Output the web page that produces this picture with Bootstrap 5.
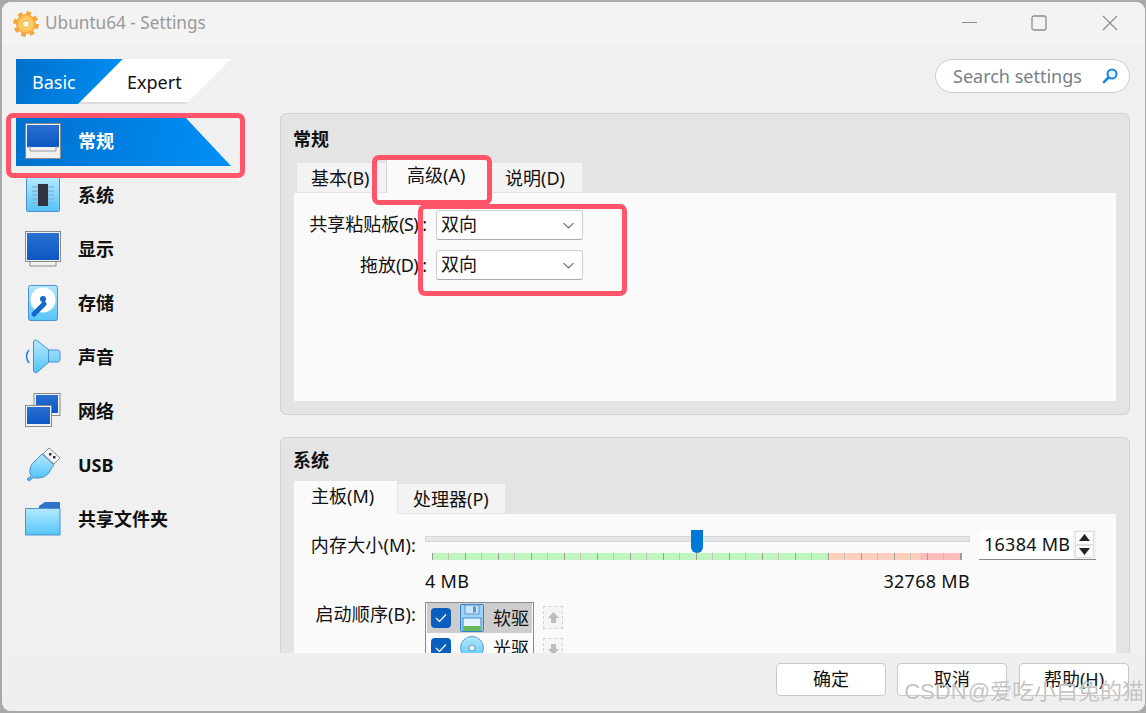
<!DOCTYPE html>
<html lang="zh-CN">
<head>
<meta charset="utf-8">
<title>Ubuntu64 - Settings</title>
<link rel="stylesheet" href="https://cdn.jsdelivr.net/npm/bootstrap@5.3.0/dist/css/bootstrap.min.css">
<style>
html,body{height:713px;overflow:hidden}
body{background:#a9a9a9;padding:2px 1px 0 2px;font-family:"Noto Sans","Noto Sans CJK SC",sans-serif;font-size:18px;color:#111;line-height:1.3}
.dlg{height:709px;background:#f0f0f0;border-radius:9px;overflow:hidden;position:relative}
.tbar{height:43px;background:#f3f3f3;padding-left:11px;color:#999}
.tbar-title{margin-left:6px;font-size:17.2px;padding-bottom:1px}
.winbtns{margin-left:auto;gap:54px;padding:0 27px 2px 0}
.w-min{margin-right:-1px}
.w-max{margin-right:1px}
.body-row{height:608px;overflow:hidden}
.side{width:278px;padding:14px 0 0 14px;flex:none}
.mode{width:215px;height:45px}
.mode-a,.mode-b{height:45px;display:flex;align-items:center;padding-top:2px}
.mode-a{width:107px;padding-left:16px;color:#fff;background:linear-gradient(110deg,#0070cc,#0090f5);clip-path:polygon(0 0,100% 0,63px 100%,0 100%)}
.mode-b{width:153px;margin-left:-45px;padding-left:49px;background:linear-gradient(#fff 43px,#ddd 43px);clip-path:polygon(45px 0,100% 0,108px 100%,0 100%)}
.snav{margin-top:10px;width:215px}
.sitem{height:54px;padding-left:9px;gap:17px;font-weight:700;color:#111;position:relative}
.sitem svg{flex:none;position:relative}
.sitem span{position:relative;padding-top:2px}
.sitem.on{color:#fff}
.sitem.on::before{content:"";position:absolute;inset:3px 0 2px;background:linear-gradient(100deg,#0070cc,#0090f8);clip-path:polygon(0 0,169px 0,100% 100%,0 100%)}
.mainc{flex:1;padding:14px 15px 0 0;min-width:0}
.searchb{width:195px;height:34px;background:#fff;border:1px solid #ccc;border-radius:17px;padding:2px 11px 0 17px;color:#76808a;margin-left:auto;margin-bottom:20px}
.searchb svg{margin-top:-2px}
.gbox{background:#e4e4e4;border:1px solid #d2d2d2;border-radius:6px;padding:0 13px}
.gbox-1{height:302px;margin-bottom:22px}
.gbox-2{height:300px}
.gtitle{font-weight:700;display:flex;align-items:center;margin-left:-1px}
.gbox-1 .gtitle{height:46px;padding-top:6px}
.gbox-2 .gtitle{height:43px;padding-top:2px}
.tabs-x{border:0;flex-wrap:nowrap;align-items:flex-end;gap:0}
.tabs-x .nav-link{height:30px;margin:0;padding:4px 0 0 14px;background:#f3f3f3;color:#111;border:0;border-bottom:1px solid #e4e4e4;border-radius:0;white-space:nowrap}
.tabs-x .nav-link.active{height:33px;padding-top:4px;background:#fafafa;color:#111;border:0;border-radius:0}
.tabs-1{padding-left:3px}
.t-1a{width:89px}.t-1b{width:105px;padding-left:20px!important;border-left:1px solid #d5d5d5!important}.t-1c{width:91px}
.t-2a{width:103px;padding-left:17px!important}.t-2b{width:107px;margin-left:1px!important;padding-left:15px!important}
.tpanel{background:#fafafa}
.tpanel-1{height:208px;padding-top:17px}
.tpanel-2{height:300px;padding-top:16px}
.lbl{width:133px;text-align:right;flex:none}
.lbl-2{width:122px;text-align:right;flex:none;letter-spacing:.15px;padding-top:1px}
.tight{letter-spacing:-.6px}
.colon{margin-left:4px}
.frow{height:30px;gap:9px}
.frow+.frow{margin-top:10px}
.frow+.frow .lbl{padding-top:1px}
.combo{width:147px;height:30px;padding:0 0 2px 4px;font-size:18px;line-height:27px;color:#111;border:1px solid #d0d0d0;border-bottom-color:#aaa;border-radius:3px;background-color:#fff;background-image:url("data:image/svg+xml,%3csvg xmlns='http://www.w3.org/2000/svg' viewBox='0 0 16 16'%3e%3cpath fill='none' stroke='%23666' stroke-width='1.3' d='M2 5l6 6 6-6'/%3e%3c/svg%3e");background-position:right 7px center;background-size:13px 13px;font-family:inherit}
.mem-row{height:30px;gap:9px}
.slid{width:545px;height:30px;position:relative}
.strack{position:absolute;left:0;right:0;top:6px;height:6px;background:#e5e7e8;border:1px solid #d5d7d8}
.sticks{position:absolute;left:7px;width:530px;top:23px;height:7px;background:repeating-linear-gradient(90deg,#a39d92 0 1.5px,transparent 1.5px 16.5px,#c4c0b6 16.5px 17.2px,transparent 17.2px 33px),linear-gradient(90deg,#bff6bf 0 395px,#ffd0bd 395px 488px,#ffbcbc 488px)}
.sthumb{position:absolute;left:266px;top:0;width:12px;height:23px;background:#0078d7;border-radius:0 0 6px 6px}
.spinb{width:117px;height:30px;border-bottom:1px solid #888;background:#f0f0f0}
.spinv{width:94px;height:29px;background:#fff;padding:3px 0 0 5px;white-space:nowrap;letter-spacing:.25px}
.spinbtn{flex:1;padding:1px 2px}
.spinbtn i{flex:1;display:flex;align-items:center;justify-content:center;background:#fbfbfb;border:1px solid #e0e0e0}
.rng{width:545px;margin:9px 0 9px 131px;height:24px;padding-top:1px;letter-spacing:.3px}
.boot-row{gap:9px}
.bootl{width:109px;border:solid #8a8a8a;border-width:1px 1px 0;padding:0 1px;flex:none}
.bootr{height:30px;padding-left:4px;gap:9px}
.bootr>span:last-child{padding-top:1px}
.bootr.sel{background:#cdcdcd}
.chk{width:20px;height:20px;background:#0a5fbe;border-radius:4px;flex:none;display:flex;align-items:center;justify-content:center}
.arrb{width:20px;height:23px;border:1px dashed #d4d4d4;background:#f5f5f5;margin-bottom:9px;display:flex;align-items:center;justify-content:center}
.arrcol{margin:4px 0 0 0}
.footb{height:58px;padding:10px 16px 0 0;gap:11px;background:#efefef}
.fbtn{width:110px;height:33px;padding:0;font-size:18px;line-height:31px;background:#fff;border:1px solid #c9c9c9;border-radius:4px;color:#111}
.fbtn-last{margin-left:1px}
.redb{position:absolute;border:5px solid #ff5469;border-radius:7px}
.red-1{left:4px;top:111px;width:239px;height:65px}
.red-2{left:370px;top:153px;width:120px;height:50px}
.red-3{left:416px;top:202px;width:209px;height:92px}
.wmk{position:absolute;right:1px;top:676px;font-size:22px;word-spacing:-5px;color:rgba(135,135,135,.5);white-space:nowrap;text-shadow:0 0 1px #fff;font-family:"Liberation Sans","Noto Sans CJK SC",sans-serif}
</style>
</head>
<body>
<div class="dlg d-flex flex-column">
  <div class="tbar d-flex align-items-center">
    <svg width="26" height="26" viewBox="0 0 26 26">
      <defs>
        <linearGradient id="gBlue" x1="0" y1="0" x2="0" y2="1"><stop offset="0" stop-color="#2a6fd0"/><stop offset="1" stop-color="#0b57c4"/></linearGradient>
        <linearGradient id="gSky" x1="0" y1="0" x2="0" y2="1"><stop offset="0" stop-color="#b4e9ff"/><stop offset="1" stop-color="#55c4f7"/></linearGradient>
        <radialGradient id="gGear"><stop offset="0" stop-color="#fff0a0"/><stop offset="1" stop-color="#fbb340"/></radialGradient>
      </defs>
      <circle cx="13" cy="13" r="11" fill="none" stroke="#f8a63a" stroke-width="3.6" stroke-dasharray="4.6 4.04"/>
      <circle cx="13" cy="13" r="9.5" fill="url(#gGear)" stroke="#ee9632" stroke-width=".8"/>
      <circle cx="13" cy="13" r="3.6" fill="#fff8d0" stroke="#f2a848"/>
    </svg>
    <span class="tbar-title">Ubuntu64 - Settings</span>
    <div class="winbtns d-flex align-items-center">
      <svg class="w-min" width="16" height="16" viewBox="0 0 16 16"><path d="M0 7.500h15" stroke="#8c8c8c" stroke-width="1.200"/></svg>
      <svg class="w-max" width="16" height="16" viewBox="0 0 16 16"><rect x="1" y="1" width="14" height="14" rx="2" fill="none" stroke="#8c8c8c" stroke-width="1.300"/></svg>
      <svg width="16" height="16" viewBox="0 0 16 16"><path d="M1 1l14 14M15 1L1 15" stroke="#8c8c8c" stroke-width="1.200"/></svg>
    </div>
  </div>

  <div class="body-row d-flex">
    <aside class="side">
      <div class="mode d-flex">
        <div class="mode-a">Basic</div>
        <div class="mode-b">Expert</div>
      </div>
      <div class="snav d-flex flex-column">
        <div class="sitem on d-flex align-items-center">
          <svg width="36" height="36" viewBox="0 0 36 36"><rect x=".5" y=".5" width="35" height="35" fill="#f1f1f1" stroke="#8a8a8a"/><rect x="2" y="2" width="32" height="22" fill="url(#gBlue)"/><path d="M2 24h3v4h26v-4h3" fill="none" stroke="#9a9a9a"/></svg>
          <span>常规</span>
        </div>
        <div class="sitem d-flex align-items-center">
          <svg width="36" height="36" viewBox="0 0 36 36"><rect x="1.500" y=".5" width="33" height="34" rx="1" fill="url(#gSky)" stroke="#4d90d0"/><path d="M7 10h22M7 14h22M7 18h22M7 22h22M7 26h22" stroke="#7fb4dc" stroke-width="1.500"/><rect x="13" y="7" width="10" height="22" fill="#30343e"/></svg>
          <span>系统</span>
        </div>
        <div class="sitem d-flex align-items-center">
          <svg width="36" height="36" viewBox="0 0 36 36"><rect x=".5" y=".5" width="35" height="30" fill="#f1f1f1" stroke="#8a8a8a"/><path d="M5 31v4h26v-4" fill="#f1f1f1" stroke="#8a8a8a"/><rect x="2" y="2" width="32" height="27" fill="url(#gBlue)"/></svg>
          <span>显示</span>
        </div>
        <div class="sitem d-flex align-items-center">
          <svg width="36" height="36" viewBox="0 0 36 36"><rect x="3.500" y=".5" width="29" height="35" rx="2" fill="url(#gSky)" stroke="#4d90d0"/><circle cx="18" cy="15" r="12.500" fill="#fff"/><circle cx="18" cy="14" r="3" fill="#1766c9"/><path d="M19 19L9 29" stroke="#1766c9" stroke-width="5" stroke-linecap="round"/></svg>
          <span>存储</span>
        </div>
        <div class="sitem d-flex align-items-center">
          <svg width="36" height="36" viewBox="0 0 36 36"><path d="M8.500 3v29q1 3 4 1L24 23h9q2 0 2-3v-6q0-3-2-3h-9L12 1.500q-3-1.500-3.500 1.500z" fill="url(#gSky)" stroke="#4d90d0"/><path d="M23.500 11v12" stroke="#4d90d0"/><path d="M4 11q-5 6 0 13" fill="none" stroke="#2f7fd6" stroke-width="1.500"/></svg>
          <span>声音</span>
        </div>
        <div class="sitem d-flex align-items-center">
          <svg width="36" height="36" viewBox="0 0 36 36"><rect x="9" y=".5" width="26" height="22" fill="#f1f1f1" stroke="#8a8a8a"/><rect x="11" y="2" width="22" height="18" fill="url(#gBlue)"/><rect x=".5" y="12.500" width="26" height="21" fill="#f1f1f1" stroke="#8a8a8a"/><rect x="2" y="14" width="23" height="17" fill="url(#gBlue)"/></svg>
          <span>网络</span>
        </div>
        <div class="sitem d-flex align-items-center">
          <svg width="36" height="36" viewBox="0 0 36 36"><path d="M24 1l11 10-6 6-11-10z" fill="#f6f6f6" stroke="#8a8a8a"/><rect x="24" y="6" width="2.500" height="2.500" fill="#333"/><rect x="28" y="9" width="2.500" height="2.500" fill="#333"/><path d="M17 7l12 11-3 4q-3 8-12 9l-5 0L5 27q-1-9 5-13z" fill="url(#gSky)" stroke="#4d90d0"/><path d="M6 29l-4 3 2 2 4-3" fill="#55b4ee" stroke="#4d90d0"/></svg>
          <span>USB</span>
        </div>
        <div class="sitem d-flex align-items-center">
          <svg width="36" height="36" viewBox="0 0 36 36"><path d="M14 5l6-4h14q1 0 1 1v6H14z" fill="#2f72c9"/><path d="M.5 7.500h34.500v26.500H.5z" fill="url(#gSky)" stroke="#4d90d0"/></svg>
          <span>共享文件夹</span>
        </div>
      </div>
    </aside>

    <main class="mainc">
      <div class="searchb d-flex align-items-center justify-content-between">
        <span>Search settings</span>
        <svg width="16" height="16" viewBox="0 0 16 16"><circle cx="10" cy="6" r="4.500" fill="#e8f5ff" stroke="#1f84e0" stroke-width="2"/><path d="M6.500 9.500L2 14" stroke="#1f84e0" stroke-width="2.600" stroke-linecap="round"/></svg>
      </div>

      <section class="gbox gbox-1">
        <div class="gtitle">常规</div>
        <ul class="nav nav-tabs tabs-x tabs-1">
          <li class="nav-item"><a class="nav-link t-1a" href="#">基本(B)</a></li>
          <li class="nav-item"><a class="nav-link active t-1b" href="#">高级(A)</a></li>
          <li class="nav-item"><a class="nav-link t-1c" href="#">说明(D)</a></li>
        </ul>
        <div class="tpanel tpanel-1">
          <div class="frow d-flex align-items-center">
            <label class="lbl">共享粘贴板<span class="tight">(S)</span><span class="colon">:</span></label>
            <select class="form-select combo"><option>双向</option></select>
          </div>
          <div class="frow d-flex align-items-center">
            <label class="lbl">拖放<span class="tight">(D)</span><span class="colon">:</span></label>
            <select class="form-select combo"><option>双向</option></select>
          </div>
        </div>
      </section>

      <section class="gbox gbox-2">
        <div class="gtitle">系统</div>
        <ul class="nav nav-tabs tabs-x">
          <li class="nav-item"><a class="nav-link active t-2a" href="#">主板(M)</a></li>
          <li class="nav-item"><a class="nav-link t-2b" href="#">处理器(P)</a></li>
        </ul>
        <div class="tpanel tpanel-2">
          <div class="mem-row d-flex align-items-center">
            <label class="lbl-2">内存大小(M):</label>
            <div class="slid">
              <div class="strack"></div>
              <div class="sticks"></div>
              <div class="sthumb"></div>
            </div>
            <div class="spinb d-flex">
              <div class="spinv">16384 MB</div>
              <div class="spinbtn d-flex flex-column">
                <i><svg width="11" height="7" viewBox="0 0 11 7"><path d="M5.500 0L11 7H0z" fill="#222"/></svg></i>
                <i><svg width="11" height="7" viewBox="0 0 11 7"><path d="M5.500 7L11 0H0z" fill="#222"/></svg></i>
              </div>
            </div>
          </div>
          <div class="rng d-flex justify-content-between align-items-center"><span>4 MB</span><span>32768 MB</span></div>
          <div class="boot-row d-flex">
            <label class="lbl-2">启动顺序(B):</label>
            <div class="bootl">
              <div class="bootr sel d-flex align-items-center">
                <span class="chk"><svg width="12" height="10" viewBox="0 0 12 10"><path d="M1 5l3.500 3.500L11 1.500" fill="none" stroke="#fff" stroke-width="1.200"/></svg></span>
                <svg width="24" height="28" viewBox="0 0 24 28"><rect x=".5" y=".5" width="23" height="27" rx="1" fill="#9fd2f7" stroke="#2f7fd6"/><rect x="5" y="1" width="14" height="9" fill="#c5e6fb" stroke="#5a93c4"/><rect x="13" y="2.500" width="3" height="6" fill="#5a93c4"/><rect x="3" y="14" width="18" height="13" fill="#e8f4fc" stroke="#3a86d0"/><rect x="3.500" y="22" width="17" height="5" fill="#62b85a"/></svg>
                <span>软驱</span>
              </div>
              <div class="bootr d-flex align-items-center">
                <span class="chk"><svg width="12" height="10" viewBox="0 0 12 10"><path d="M1 5l3.500 3.500L11 1.500" fill="none" stroke="#fff" stroke-width="1.200"/></svg></span>
                <svg width="24" height="28" viewBox="0 0 24 28"><circle cx="12" cy="14" r="11.500" fill="url(#gSky)" stroke="#5aa0e0"/><circle cx="12" cy="14" r="3" fill="#fff" stroke="#5a93c4"/></svg>
                <span>光驱</span>
              </div>
            </div>
            <div class="arrcol">
              <div class="arrb"><svg width="13" height="13" viewBox="0 0 13 13"><path d="M6.500 1L12 7H9v5H4V7H1z" fill="#bdbdbd"/></svg></div>
              <div class="arrb"><svg width="13" height="13" viewBox="0 0 13 13"><path d="M6.500 12L12 6H9V1H4v5H1z" fill="#bdbdbd"/></svg></div>
            </div>
          </div>
        </div>
      </section>
    </main>
  </div>

  <div class="footb d-flex justify-content-end align-items-start">
    <button type="button" class="btn fbtn">确定</button>
    <button type="button" class="btn fbtn">取消</button>
    <button type="button" class="btn fbtn fbtn-last">帮助(H)</button>
  </div>

  <div class="redb red-1"></div>
  <div class="redb red-2"></div>
  <div class="redb red-3"></div>
  <div class="wmk">CSDN @爱吃小白兔的猫</div>
</div>
</body>
</html>
